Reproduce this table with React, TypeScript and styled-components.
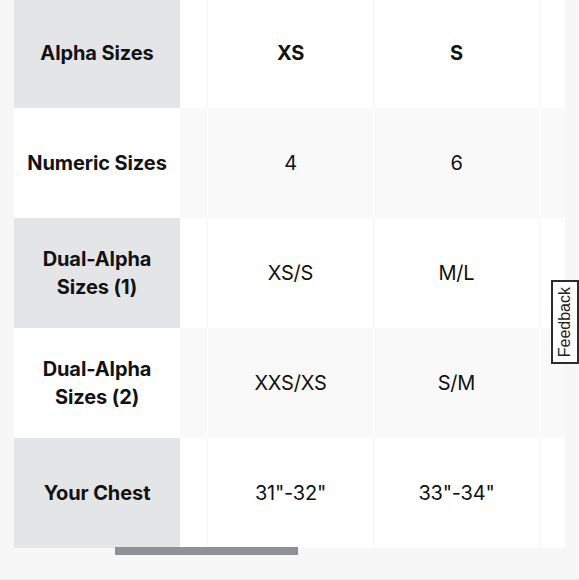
import React from 'react'
import styled, { createGlobalStyle } from 'styled-components';

interface SizeRow {
    label: string,
    values: string[]
}

const rows: SizeRow[] = [
    { label: 'Alpha Sizes', values: ['', 'XS', 'S', ''] },
    { label: 'Numeric Sizes', values: ['', '4', '6', ''] },
    { label: 'Dual-Alpha Sizes (1)', values: ['', 'XS/S', 'M/L', ''] },
    { label: 'Dual-Alpha Sizes (2)', values: ['', 'XXS/XS', 'S/M', ''] },
    { label: 'Your Chest', values: ['', '31"-32"', '33"-34"', ''] },
];

const GlobalStyle = createGlobalStyle`
    html, body {
        margin: 0;
        padding: 0;
        background: #f7f7f7;
        font-family: Inter, "Noto Sans", sans-serif;
        color: #121212;
    }
`;

const Page = styled.div`
    height: 579px;
    border-bottom: 1px solid #e9e9e9;
    padding-left: 14px;
    overflow: hidden;
`;

const TableWrapper = styled.div`
    width: 551px;
    margin-top: -2px;
    overflow: hidden;
`;

const Row = styled.div`
    display: flex;
    height: 110px;
`;

const LabelCell = styled.div<{ $shaded: boolean }>`
    flex: 0 0 166px;
    display: flex;
    align-items: center;
    justify-content: center;
    padding: 0 12px;
    box-sizing: border-box;
    text-align: center;
    background: ${({ $shaded }) => ($shaded ? '#e4e5e7' : '#ffffff')};
    font-size: 20px;
    font-weight: 700;
    line-height: 28px;
    letter-spacing: -0.1px;
`;

const DataCell = styled.div<{ $striped: boolean, $width: number }>`
    flex: 0 0 ${({ $width }) => $width}px;
    display: flex;
    align-items: center;
    justify-content: center;
    box-sizing: border-box;
    background: ${({ $striped }) => ($striped ? '#f9f9f9' : '#ffffff')};
    border-right: 1px solid ${({ $striped }) => ($striped ? '#ffffff' : '#f4f4f4')};
    font-size: 20px;
    font-weight: 400;
    letter-spacing: -0.2px;
`;

const HeadValue = styled.span`
    font-weight: 700;
`;

const ScrollTrack = styled.div`
    width: 551px;
    height: 8px;
    margin-top: -1px;
    position: relative;
`;

const ScrollThumb = styled.div`
    position: absolute;
    top: 0;
    height: 8px;
    background: #8f9195;
`;

const FeedbackTab = styled.button`
    position: fixed;
    top: 280px;
    right: 0;
    width: 28px;
    height: 84px;
    padding: 0;
    background: #ffffff;
    border: 2px solid #2b2b2b;
    color: #222;
    font-family: "Liberation Sans", Arial, sans-serif;
    font-size: 16px;
    display: flex;
    align-items: center;
    justify-content: center;
`;

const FeedbackText = styled.span`
    writing-mode: vertical-rl;
    transform: rotate(180deg);
`;

const widths = [28, 166, 166, 166];

function App() {
    return (
        <Page>
            <GlobalStyle />
            <TableWrapper>
                {rows.map((row, i) => (
                    <Row key={row.label}>
                        <LabelCell $shaded={i % 2 === 0}>{row.label}</LabelCell>
                        {row.values.map((v, j) => (
                            <DataCell key={j} $striped={i % 2 === 1} $width={widths[j]}>
                                {i === 0 ? <HeadValue>{v}</HeadValue> : v}
                            </DataCell>
                        ))}
                    </Row>
                ))}
            </TableWrapper>
            <ScrollTrack>
                <ScrollThumb style={{ left: 101, width: 183 }} />
            </ScrollTrack>
            <FeedbackTab>
                <FeedbackText>Feedback</FeedbackText>
            </FeedbackTab>
        </Page>
    )
}

export default App;
